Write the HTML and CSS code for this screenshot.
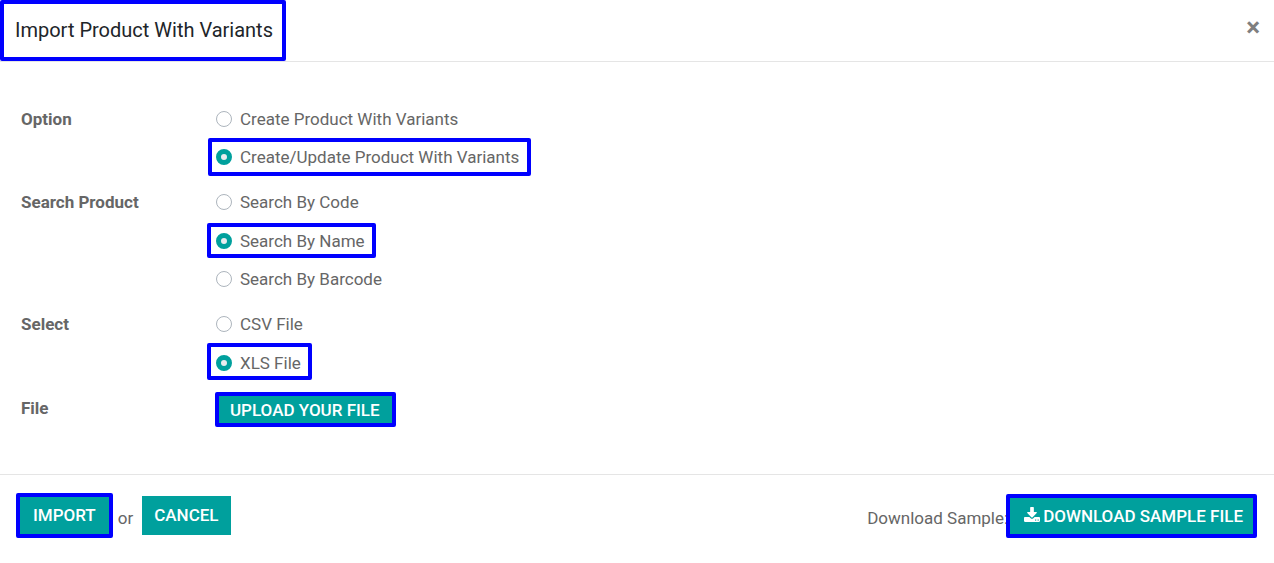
FILE: index.html
```html
<!DOCTYPE html>
<html lang="en">
<head>
<meta charset="utf-8">
<title>Import Product With Variants</title>
<link rel="stylesheet" href="styles.css">
</head>
<body>
<form class="dialog">
  <header class="header">
    <h1 class="title mark">Import Product With Variants</h1>
    <button type="button" class="close" aria-label="Close">×</button>
  </header>
  <main class="body">
    <div class="row" role="radiogroup" aria-labelledby="l1">
      <span class="name" id="l1">Option</span>
      <div class="choices">
        <label class="choice"><input type="radio" name="option">Create Product With Variants</label>
        <label class="choice mark wide"><input type="radio" name="option" checked>Create/Update Product With Variants</label>
      </div>
    </div>
    <div class="row" role="radiogroup" aria-labelledby="l2">
      <span class="name" id="l2">Search Product</span>
      <div class="choices">
        <label class="choice"><input type="radio" name="search">Search By Code</label>
        <label class="choice mark short"><input type="radio" name="search" checked>Search By Name</label>
        <label class="choice"><input type="radio" name="search">Search By Barcode</label>
      </div>
    </div>
    <div class="row" role="radiogroup" aria-labelledby="l3">
      <span class="name" id="l3">Select</span>
      <div class="choices">
        <label class="choice"><input type="radio" name="type">CSV File</label>
        <label class="choice mark low"><input type="radio" name="type" checked>XLS File</label>
      </div>
    </div>
    <div class="row file">
      <span class="name" id="l4">File</span>
      <div class="choices">
        <button type="button" class="btn upload mark">UPLOAD YOUR FILE</button>
      </div>
    </div>
  </main>
  <footer class="footer">
    <button type="submit" class="btn import mark">IMPORT</button>
    <span class="or">or</span>
    <button type="button" class="btn cancel">CANCEL</button>
    <span class="sample">Download Sample:</span>
    <button type="button" class="btn download mark">
      <svg class="icon" viewBox="0 0 1664 1536" aria-hidden="true"><path fill="currentColor" d="M1280 1344q0-26-19-45t-45-19-45 19-19 45 19 45 45 19 45-19 19-45zm256 0q0-26-19-45t-45-19-45 19-19 45 19 45 45 19 45-19 19-45zm128-224v320q0 40-28 68t-68 28H96q-40 0-68-28t-28-68v-320q0-40 28-68t68-28h465l135 136q58 56 136 56t136-56l136-136h464q40 0 68 28t28 68zm-325-569q17 41-14 70l-448 448q-18 19-45 19t-45-19L339 621q-31-29-14-70 17-39 59-39h256V64q0-26 19-45t45-19h256q26 0 45 19t19 45v448h256q42 0 59 39z"/></svg>DOWNLOAD SAMPLE FILE</button>
  </footer>
</form>
</body>
</html>
```
FILE: styles.css
```css
* { box-sizing: border-box; }
body {
  margin: 0;
  background: #fff;
  color: #666;
  font: 17px/24px Roboto, "Liberation Sans", sans-serif;
}
.mark { border: 4px solid #00f; border-radius: 2px; }
.header {
  display: flex;
  justify-content: space-between;
  align-items: flex-start;
  border-bottom: 1px solid #e5e5e5;
}
.title {
  margin: 0;
  padding: 11px 9px 12px 11px;
  color: #212529;
  font-size: 20px;
  line-height: 30px;
  font-weight: 400;
}
.close {
  margin: 12px 14px 0 0;
  padding: 0;
  border: 0;
  background: none;
  color: #7f7f7f;
  font: 700 26px/30px Roboto, sans-serif;
}
.body {
  display: grid;
  gap: 7px;
  padding: 38px 21px 47px;
}
.row { display: flex; align-items: flex-start; }
.name { width: 186px; padding-top: 7px; font-weight: 700; }
.choices { display: flex; flex-direction: column; align-items: flex-start; }
.choice {
  display: flex;
  align-items: center;
  gap: 8px;
  height: 38px;
  padding: 0 9px;
}
.choice.mark { padding: 0 7px 0 5px; }
.choice.wide { margin-left: 1px; padding: 0 8px 0 4px; }
.choice.short { height: 35px; margin: 2px 0; }
.choice.low { height: 37px; padding-top: 3px; }
.choice input {
  appearance: none;
  width: 16px;
  height: 16px;
  margin: 0;
  border: 1px solid #adb5bd;
  border-radius: 50%;
  background: #fff;
}
.choice input:checked { border: 5px solid #00a09d; background: #e9ecef; }
.btn {
  border: 0 solid #00f;
  background: #00a09d;
  color: #fff;
  font: 500 17px/24px Roboto, "Liberation Sans", sans-serif;
}
.btn.mark { border-width: 4px; }
.file .name { padding-top: 9px; }
.upload { margin: 5px 0 0 8px; padding: 2px 12px 1px 11px; }
.footer {
  display: flex;
  align-items: center;
  padding: 18px 17px 24px 16px;
  border-top: 1px solid #e5e5e5;
}
.import { padding: 6px 13px 7px 13px; }
.or { padding: 4px 9px 0 5px; }
.cancel { padding: 7px 12px 8px; }
.sample { margin: 0 -2px 0 auto; padding-top: 4px; }
.download { padding: 6px 10px 6px 14px; }
.icon { width: 16px; height: 15px; margin-right: 3px; }
```
